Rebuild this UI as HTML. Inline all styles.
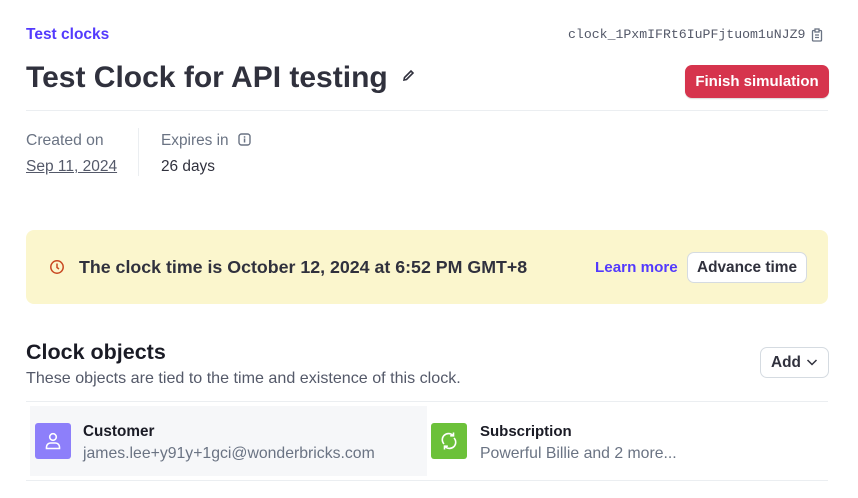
<!DOCTYPE html>
<html><head><meta charset="utf-8"><style>
*{margin:0;padding:0;box-sizing:border-box}
body{width:858px;height:498px;background:#fff;font-family:"Liberation Sans",sans-serif;color:#30313d;position:relative;overflow:hidden}
.a{position:absolute;white-space:nowrap}
</style></head><body>
<div class="a" style="left:26px;top:26px;font-size:15.5px;font-weight:bold;color:#533afd">Test clocks</div>
<div class="a" style="left:568px;top:27px;font-family:'Liberation Mono',monospace;font-size:13.2px;color:#545969">clock_1PxmIFRt6IuPFjtuom1uNJZ9</div>
<svg class="a" style="left:811px;top:28px" width="12" height="14" viewBox="0 0 12 14" fill="none" stroke="#6a7383" stroke-width="1.3"><rect x="1.5" y="2.5" width="9" height="10.5" rx="1"/><rect x="4" y="1" width="4" height="3" fill="#fff"/><path d="M4 7h4M4 9.5h4"/></svg>
<div class="a" style="left:26px;top:61px;font-size:30px;font-weight:bold;color:#30313d">Test Clock for API testing</div>
<svg class="a" style="left:402px;top:69px" width="13" height="13" viewBox="0 0 13 13" fill="none" stroke="#30313d" stroke-width="1.6"><path d="M2 11l.5-2.5L9 2l2 2-6.5 6.5z"/></svg>
<div class="a" style="left:685px;top:65px;width:144px;height:33px;background:#d6344d;border-radius:7px;color:#fff;font-size:15px;font-weight:bold;text-align:center;line-height:33px;box-shadow:0 1px 1px rgba(0,0,0,.15)">Finish simulation</div>
<div class="a" style="left:26px;top:110px;width:802px;height:1px;background:#ebeef1"></div>
<div class="a" style="left:26px;top:132px;font-size:15.7px;color:#6a7383">Created on</div>
<div class="a" style="left:26px;top:158px;font-size:15.5px;color:#545969;text-decoration:underline">Sep 11, 2024</div>
<div class="a" style="left:138px;top:128px;width:1px;height:48px;background:#ebeef1"></div>
<div class="a" style="left:161px;top:132px;font-size:15.4px;color:#6a7383">Expires in</div>
<svg class="a" style="left:238px;top:133px" width="13" height="13" viewBox="0 0 13 13"><rect x="1" y="1" width="11" height="11" rx="2.5" fill="none" stroke="#6a7383" stroke-width="1.4"/><rect x="5.8" y="5.5" width="1.5" height="4" fill="#6a7383"/><rect x="5.8" y="3.2" width="1.5" height="1.5" fill="#6a7383"/></svg>
<div class="a" style="left:161px;top:158px;font-size:15.4px;color:#30313d">26 days</div>
<div class="a" style="left:26px;top:230px;width:802px;height:74px;background:#fbf6cd;border-radius:8px"></div>
<svg class="a" style="left:49px;top:259px" width="16" height="16" viewBox="0 0 16 16" fill="none" stroke="#c84821" stroke-width="1.5"><circle cx="8" cy="8" r="6.2"/><path d="M8 4.5V8.5l2 1.5"/></svg>
<div class="a" style="left:79px;top:257px;font-size:17.8px;font-weight:bold;color:#30313d">The clock time is October 12, 2024 at 6:52 PM GMT+8</div>
<div class="a" style="left:595px;top:259px;font-size:15.2px;font-weight:bold;color:#533afd">Learn more</div>
<div class="a" style="left:687px;top:252px;width:120px;height:31px;background:#fff;border:1px solid #d5dbe1;border-radius:7px;font-size:15.4px;font-weight:bold;text-align:center;line-height:29px;color:#30313d">Advance time</div>
<div class="a" style="left:26px;top:340px;font-size:21.5px;font-weight:bold;color:#1a1b25">Clock objects</div>
<div class="a" style="left:26px;top:369px;font-size:16.1px;color:#545969">These objects are tied to the time and existence of this clock.</div>
<div class="a" style="left:760px;top:347px;width:69px;height:31px;background:#fff;border:1px solid #d5dbe1;border-radius:7px;font-size:15.4px;font-weight:bold;line-height:29px;padding-left:10px;color:#30313d">Add</div>
<svg class="a" style="left:806px;top:357px" width="12" height="10" viewBox="0 0 12 10" fill="none" stroke="#30313d" stroke-width="1.5"><path d="M1.5 3l4.5 4.5L10.5 3"/></svg>
<div class="a" style="left:26px;top:401px;width:802px;height:1px;background:#ebeef1"></div>
<div class="a" style="left:30px;top:406px;width:397px;height:70px;background:#f6f7f9"></div>
<div class="a" style="left:35px;top:423px;width:36px;height:36px;background:#8d7ffa;border-radius:3px"></div>
<svg class="a" style="left:35px;top:423px" width="36" height="36" viewBox="0 0 36 36" fill="none" stroke="#fff" stroke-width="1.6"><circle cx="18" cy="14" r="3.3"/><path d="M11.5 25.5v-1.5a4 4 0 0 1 4-4h5a4 4 0 0 1 4 4v1.5z"/></svg>
<div class="a" style="left:83px;top:423px;font-size:15.3px;font-weight:bold;color:#1a1b25">Customer</div>
<div class="a" style="left:83px;top:445px;font-size:15.8px;color:#6a7383">james.lee+y91y+1gci@wonderbricks.com</div>
<div class="a" style="left:431px;top:423px;width:36px;height:36px;background:#6cc13a;border-radius:3px"></div>
<svg class="a" style="left:431px;top:423px" width="36" height="36" viewBox="0 0 36 36" fill="none" stroke="#fff" stroke-width="1.6"><path d="M13 21a6 6 0 0 1 9-8.5M23 15a6 6 0 0 1-9 8.5"/><path d="M22.5 9.5v3.3h-3.3M13.5 26.5v-3.3h3.3"/></svg>
<div class="a" style="left:480px;top:423px;font-size:15px;font-weight:bold;color:#1a1b25">Subscription</div>
<div class="a" style="left:480px;top:445px;font-size:15.8px;color:#6a7383">Powerful Billie and 2 more...</div>
<div class="a" style="left:26px;top:480px;width:802px;height:1px;background:#ebeef1"></div>
</body></html>
